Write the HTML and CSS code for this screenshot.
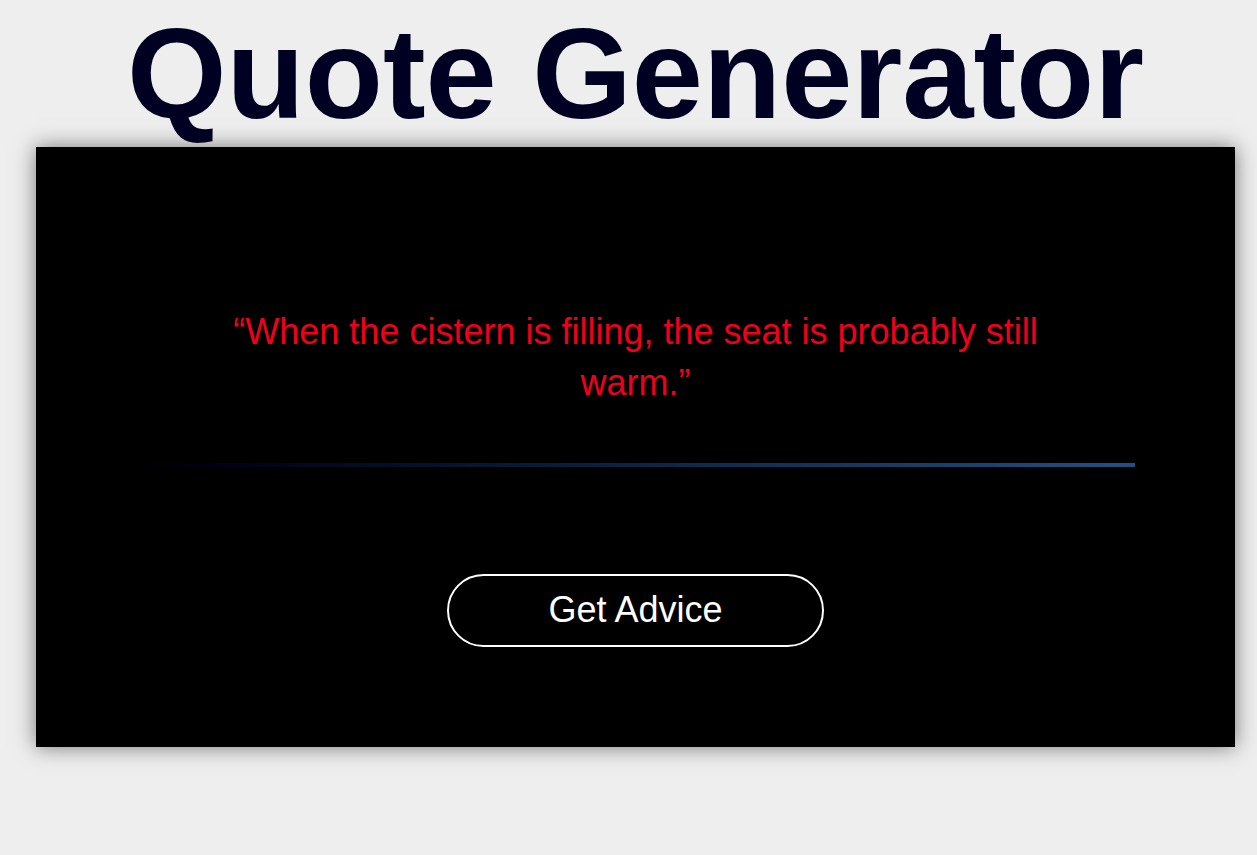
FILE: index.html
```html
<!DOCTYPE html>
<html lang="en">
<head>
<meta charset="utf-8">
<meta name="viewport" content="width=device-width, initial-scale=1">
<title>Quote Generator</title>
<link rel="stylesheet" href="styles.css">
</head>
<body>
<main class="page">
  <h1 class="title">Quote Generator</h1>
  <section class="card">
    <p class="quote">“When the cistern is filling, the seat is probably still warm.”</p>
    <div class="divider"></div>
    <button class="advice-button" type="button">Get Advice</button>
  </section>
</main>
</body>
</html>
```

FILE: styles.css
```css
* {
  box-sizing: border-box;
}

body {
  margin: 0;
  background: #eee;
  font-family: "Liberation Sans", Arial, sans-serif;
}

.page {
  padding: 0 22px 108px 36px;
}

.title {
  margin: 0;
  color: #000022;
  font-size: 128px;
  line-height: 147px;
  text-align: center;
  white-space: nowrap;
}

.card {
  display: flex;
  flex-direction: column;
  align-items: center;
  padding: 159px 100px 100px;
  background: #000;
  box-shadow: 0 0 20px rgba(0, 0, 0, 0.5);
}

.quote {
  width: 100%;
  margin: 0;
  padding: 0 96px;
  color: #f0001a;
  font-size: 36px;
  line-height: 51px;
  text-align: center;
}

.divider {
  width: 100%;
  height: 4px;
  margin: 55px 0 107px;
  background: linear-gradient(to right, #000, #000016 8%, #061c38 40%, #225084);
}

.advice-button {
  width: 377px;
  max-width: 100%;
  padding: 13px 24px 15px;
  border: 2px solid #fff;
  border-radius: 37px;
  background: transparent;
  color: #fff;
  font-family: inherit;
  font-size: 36px;
  line-height: 41px;
  cursor: pointer;
}
```
